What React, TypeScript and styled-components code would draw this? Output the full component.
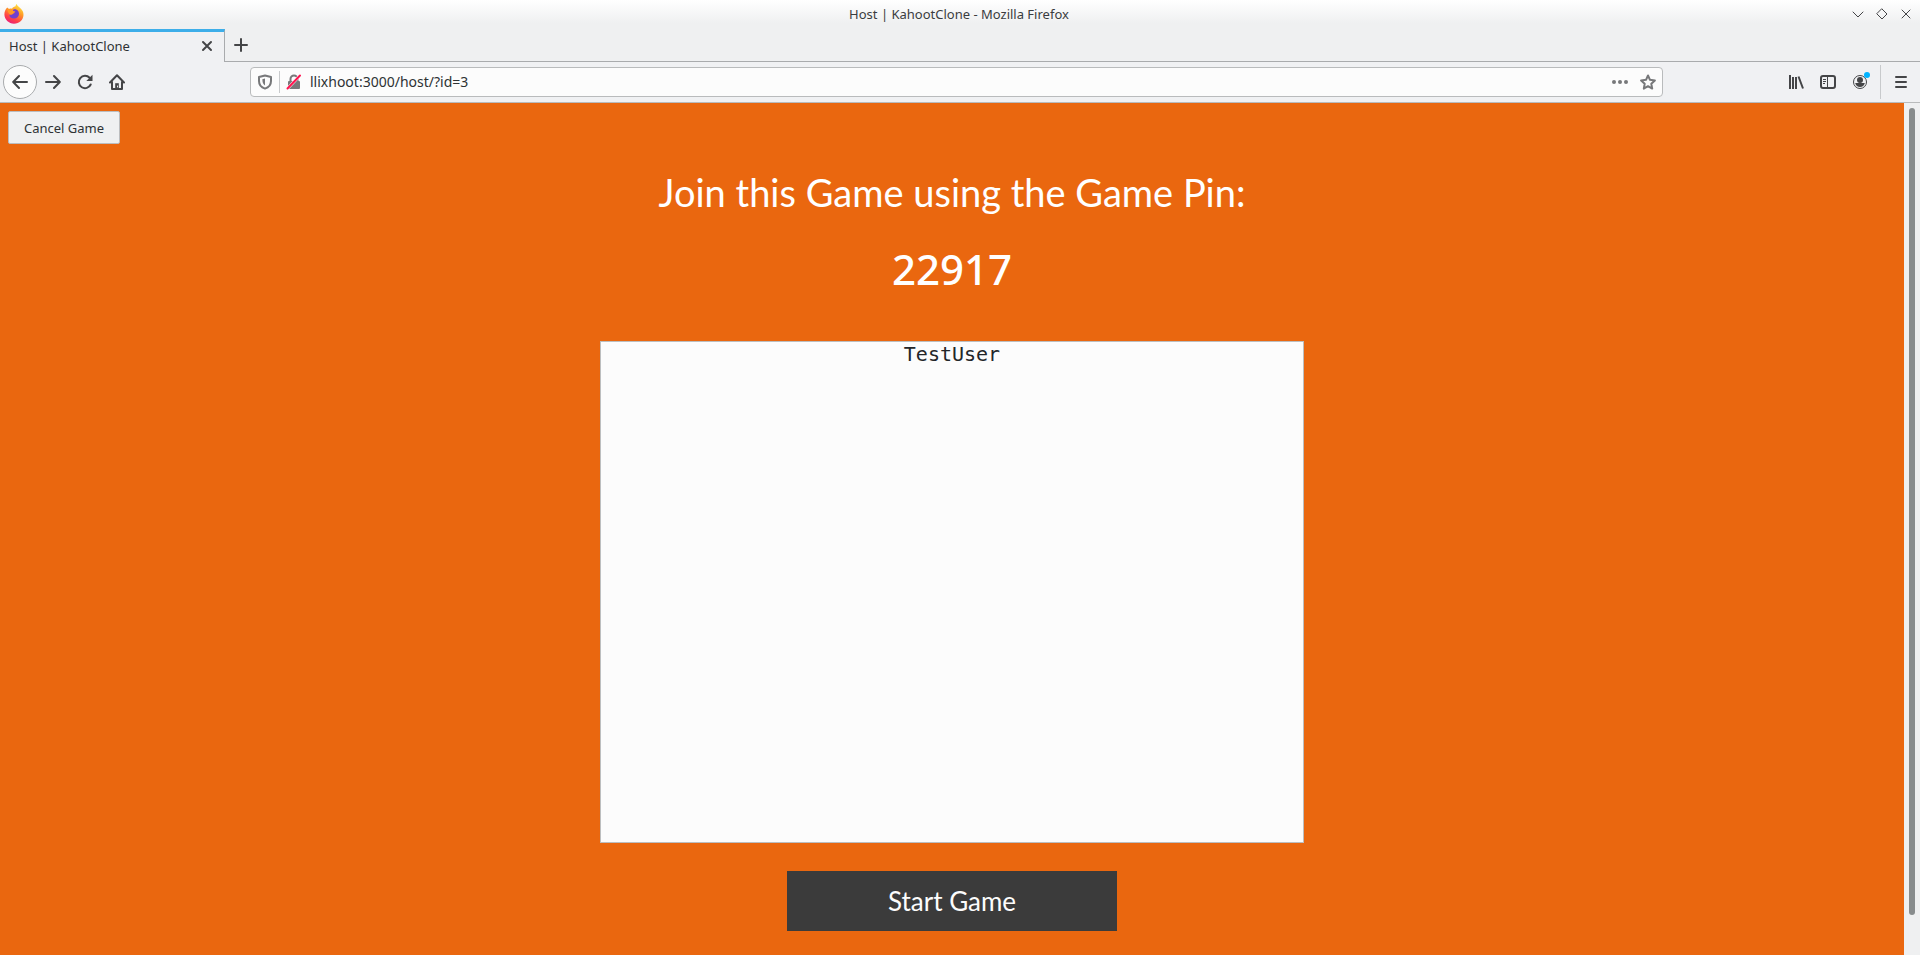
import React from "react";
import styled, { createGlobalStyle } from "styled-components";

const Global = createGlobalStyle`
  * { box-sizing: border-box; }
  body { margin: 0; background: #eff0f1; color: #2e3234; font: 14px/20px "Noto Sans", sans-serif; }
  button, input { font: inherit; color: inherit; }
  svg { display: block; }
`;

const Window = styled.div`
  display: flex;
  flex-direction: column;
  min-height: 100vh;
`;

const TitleBar = styled.header`
  display: grid;
  grid-template-columns: 1fr auto 1fr;
  align-items: center;
  height: 29px;
  padding: 0 6px 2px 4px;
  font-size: 13px;
  color: #3a3d3f;
  background: linear-gradient(#ffffff, #eff0f1 80%);
`;

const WindowControls = styled.div`
  display: flex;
  justify-content: flex-end;
  gap: 8px;
`;

const IconButton = styled.button<{ $size?: number }>`
  display: grid;
  place-items: center;
  flex: none;
  width: ${(p) => p.$size ?? 32}px;
  height: ${(p) => p.$size ?? 32}px;
  padding: 0;
  border: 0;
  background: none;
  color: #444547;
`;

const BackButton = styled(IconButton)`
  border: 1px solid #a9abad;
  border-radius: 50%;
  background: #fcfcfc;
`;

const TabStrip = styled.nav`
  display: flex;
  height: 33px;
`;

const Tab = styled.div`
  display: flex;
  align-items: center;
  justify-content: space-between;
  width: 225px;
  padding: 0 7px 2px 9px;
  border-top: 3px solid #3daee9;
  border-right: 1px solid #a9abad;
  font-size: 13px;
  background: #f0f1f3;
`;

const TabSpace = styled.div`
  flex: 1;
  border-bottom: 1px solid #a9abad;
`;

const Toolbar = styled.div`
  display: flex;
  align-items: center;
  justify-content: space-between;
  height: 41px;
  padding: 0 3px;
  border-bottom: 1px solid #b9bbbc;
  background: #f0f1f3;
`;

const ToolGroup = styled.div`
  display: flex;
  align-items: center;
  width: 247px;
`;

const ToolGroupEnd = styled(ToolGroup)`
  justify-content: flex-end;
  width: 254px;
`;

const Separator = styled.span<{ $height: number; $gap: number }>`
  width: 1px;
  height: ${(p) => p.$height}px;
  margin: 0 ${(p) => p.$gap}px;
  background: #c8cacc;
`;

const AddressBar = styled.div`
  display: flex;
  align-items: center;
  flex: 1;
  height: 30px;
  padding: 0 0 0 4px;
  border: 1px solid #b9bbbc;
  border-radius: 4px;
  background: #fcfcfc;
`;

const Address = styled.input`
  flex: 1;
  min-width: 0;
  padding: 0 6px;
  border: 0;
  outline: 0;
  background: none;
`;

const Viewport = styled.div`
  display: flex;
  flex: 1;
`;

const Page = styled.main`
  display: flex;
  flex-direction: column;
  align-items: center;
  flex: 1;
  padding: 8px 0 24px;
  background: #ea670f;
`;

const Scrollbar = styled.div`
  display: flex;
  width: 16px;
  padding: 5px 5px 40px;
  background: #eff0f1;
`;

const Thumb = styled.div`
  flex: 1;
  border-radius: 3px;
  background: #888c8d;
`;

const CancelButton = styled.button`
  align-self: flex-start;
  width: 112px;
  height: 33px;
  margin-left: 8px;
  padding: 0;
  border: 1px solid #bbbdbf;
  border-radius: 2px;
  font-size: 13px;
  background: #eff0f1;
`;

const Heading = styled.h1`
  margin: 26px 0 0;
  font: 400 38px/44px Lato, sans-serif;
  color: #ffffff;
`;

const Pin = styled.h2`
  margin: 27px 0 44px;
  font: 500 42px/56px "Noto Sans", sans-serif;
  color: #ffffff;
`;

const PlayerList = styled.ul`
  width: 37%;
  height: 502px;
  margin: 0 0 28px;
  padding: 0;
  border: 1px solid #bcbebf;
  list-style: none;
  text-align: center;
  font: 20px/24px "DejaVu Sans Mono", monospace;
  color: #232629;
  background: #fcfcfc;
`;

const StartButton = styled.button`
  width: 330px;
  height: 60px;
  border: 0;
  font: 400 26px/32px Lato, sans-serif;
  color: #fcfcfc;
  background: #3b3b3b;
`;

const Stroke = ({ d, size = 16, width = 2 }: { d: string; size?: number; width?: number }) => (
  <svg width={size} height={size} viewBox={`0 0 ${size} ${size}`} fill="none" stroke="currentColor" strokeWidth={width} strokeLinecap="round" strokeLinejoin="round">
    <path d={d} />
  </svg>
);

const FirefoxLogo = () => (
  <svg width="20" height="20" viewBox="0 0 20 20">
    <defs>
      <linearGradient id="flame" x1="0.8" y1="0" x2="0.3" y2="1">
        <stop offset="0" stopColor="#fff04a" />
        <stop offset="0.4" stopColor="#ff9a25" />
        <stop offset="0.75" stopColor="#ff4048" />
        <stop offset="1" stopColor="#e81e7b" />
      </linearGradient>
    </defs>
    <path d="M3.2 3.5 5 5.1c1-.5 2-.6 3-.4C9 3 10.600 2.500 11.500 2.300 11.600 1.200 12 .4 12.700 0c.3 1.800 2.400 2.700 3.700 4.300C18.500 6 19.600 8.300 19.500 11c-.2 5-4.300 8.700-9.500 8.700S.4 15.600.4 10.600c0-2.800.9-5.200 2.800-7.100Z" fill="url(#flame)" />
    <path d="M9.500 5.500c3.300-.8 5.600 1.600 5.500 4.600-.1 2.700-2.200 4.500-4.900 4.500-2.800 0-4.800-1.900-4.800-4.200 1 .7 2.600.5 3.500-.4l1.500-1c.4-1-.8-1.500-2-1.600Z" fill="#7040cf" />
    <path d="M3.200 4 5 5.500c2-.7 3.500 0 4.300 1.600l2 .4c-.2 1-1.500 1.300-2.200 1.700-.5 1.800-2.600 1.500-3.700 1.100C4 8.500 3 6 3.200 4Z" fill="#ff9829" />
  </svg>
);

const ReloadIcon = () => (
  <svg width="16" height="16" viewBox="0 0 16 16" fill="none" stroke="currentColor" strokeWidth="2" strokeLinecap="round">
    <path d="M13.700 10.500A6.200 6.200 0 1 1 12.600 3.800" />
    <path d="M15.500.8v6.200H9.300Z" fill="currentColor" stroke="none" />
  </svg>
);

const HomeIcon = () => (
  <svg width="16" height="16" viewBox="0 0 16 16" fill="none" stroke="currentColor" strokeWidth="2" strokeLinecap="round" strokeLinejoin="round">
    <path d="M1 8.500 8 1.300l7 7.200M3 8v7h10V8" />
    <path d="M6.200 15V9.200h3.600V15Z" fill="currentColor" stroke="none" />
    <path d="M8.500 12v1" stroke="#f0f1f3" strokeWidth="1" />
  </svg>
);

const ShieldIcon = () => (
  <svg width="16" height="16" viewBox="0 0 16 16" fill="none" stroke="#77787a" strokeWidth="2" strokeLinejoin="round">
    <path d="M8 1.500 14 3v4c0 4-2.500 6.500-6 7.600C4.500 13.500 2 11 2 7V3Z" />
    <path d="M8 4.500v7C6.200 10.300 5.500 9 5.300 5.200Z" fill="#77787a" stroke="none" />
  </svg>
);

const InsecureIcon = () => (
  <svg width="16" height="16" viewBox="0 0 16 16" fill="none">
    <path d="M4.500 8V5a3.500 3.500 0 0 1 7 0v3" stroke="#77787a" strokeWidth="2" />
    <rect x="2" y="7" width="12" height="8" rx="1" fill="#77787a" />
    <path d="M1.500 14.500 14 1.500" stroke="#fcfcfc" strokeWidth="3" />
    <path d="M1.500 14.500 14 1.500" stroke="#ff1450" strokeWidth="2" strokeLinecap="round" />
  </svg>
);

const DotsIcon = () => (
  <svg width="16" height="16" viewBox="0 0 16 16" fill="#77787a">
    <circle cx="2" cy="8" r="2" />
    <circle cx="8" cy="8" r="2" />
    <circle cx="14" cy="8" r="2" />
  </svg>
);

const StarIcon = () => (
  <svg width="16" height="16" viewBox="0 0 16 16" fill="none" stroke="#77787a" strokeWidth="2" strokeLinejoin="round">
    <path d="m8 1.500 2 4.300 4.900.6-3.600 3.300.9 4.900L8 12.200l-4.200 2.400.9-4.900L1.100 6.400 6 5.800Z" />
  </svg>
);

const LibraryIcon = () => (
  <svg width="16" height="16" viewBox="0 0 16 16" fill="none" stroke="currentColor" strokeWidth="2">
    <path d="M2 1v14M5 3v12M8 3v12M10.500 2.500l4.500 12" />
  </svg>
);

const SidebarIcon = () => (
  <svg width="16" height="16" viewBox="0 0 16 16" fill="none" stroke="currentColor">
    <rect x="1" y="2" width="14" height="12" rx="2" strokeWidth="2" />
    <path d="M7.500 2v12M3 5.500h3M3 7.500h3M3 9.500h2" />
  </svg>
);

const AccountIcon = () => (
  <svg width="20" height="20" viewBox="0 0 20 20">
    <circle cx="10" cy="10" r="6.500" fill="none" stroke="currentColor" />
    <circle cx="10" cy="8" r="3" fill="currentColor" />
    <path d="M5.200 11h9.600c-.6 2.500-2.400 4-4.800 4s-4.200-1.500-4.800-4Z" fill="currentColor" />
    <circle cx="17" cy="3" r="3" fill="#00b3ff" />
  </svg>
);

export default function App() {
  return (
    <Window>
      <Global />
      <TitleBar>
        <FirefoxLogo />
        <span>Host | KahootClone - Mozilla Firefox</span>
        <WindowControls>
          <IconButton $size={16} aria-label="Minimize"><Stroke d="M3 6l5 5 5-5" width={1} /></IconButton>
          <IconButton $size={16} aria-label="Maximize"><Stroke d="M8 3l5 5-5 5-5-5Z" width={1} /></IconButton>
          <IconButton $size={16} aria-label="Close"><Stroke d="M4 4l8 8M12 4l-8 8" width={1} /></IconButton>
        </WindowControls>
      </TitleBar>
      <TabStrip>
        <Tab>
          <span>Host | KahootClone</span>
          <IconButton $size={20} aria-label="Close tab"><Stroke d="M4 4l8 8M12 4l-8 8" /></IconButton>
        </Tab>
        <TabSpace>
          <IconButton aria-label="New tab"><Stroke d="M8 2v12M2 8h12" /></IconButton>
        </TabSpace>
      </TabStrip>
      <Toolbar>
        <ToolGroup>
          <BackButton $size={34} aria-label="Back"><Stroke d="M15 8H1.500M7 2 1.200 8 7 14" /></BackButton>
          <IconButton aria-label="Forward"><Stroke d="M1 8h13.500M9 2l5.800 6L9 14" /></IconButton>
          <IconButton aria-label="Reload"><ReloadIcon /></IconButton>
          <IconButton aria-label="Home"><HomeIcon /></IconButton>
        </ToolGroup>
        <AddressBar>
          <IconButton $size={20} aria-label="Tracking protection"><ShieldIcon /></IconButton>
          <Separator $height={22} $gap={4} />
          <IconButton $size={20} aria-label="Connection not secure"><InsecureIcon /></IconButton>
          <Address aria-label="Address" defaultValue="llixhoot:3000/host/?id=3" />
          <IconButton $size={28} aria-label="Page actions"><DotsIcon /></IconButton>
          <IconButton $size={28} aria-label="Bookmark"><StarIcon /></IconButton>
        </AddressBar>
        <ToolGroupEnd>
          <IconButton aria-label="Library"><LibraryIcon /></IconButton>
          <IconButton aria-label="Sidebars"><SidebarIcon /></IconButton>
          <IconButton aria-label="Account"><AccountIcon /></IconButton>
          <Separator $height={34} $gap={4} />
          <IconButton aria-label="Menu"><Stroke d="M3 3h10M3 8h10M3 13h10" /></IconButton>
        </ToolGroupEnd>
      </Toolbar>
      <Viewport>
        <Page>
          <CancelButton>Cancel Game</CancelButton>
          <Heading>Join this Game using the Game Pin:</Heading>
          <Pin>22917</Pin>
          <PlayerList>
            <li>TestUser</li>
          </PlayerList>
          <StartButton>Start Game</StartButton>
        </Page>
        <Scrollbar>
          <Thumb />
        </Scrollbar>
      </Viewport>
    </Window>
  );
}
